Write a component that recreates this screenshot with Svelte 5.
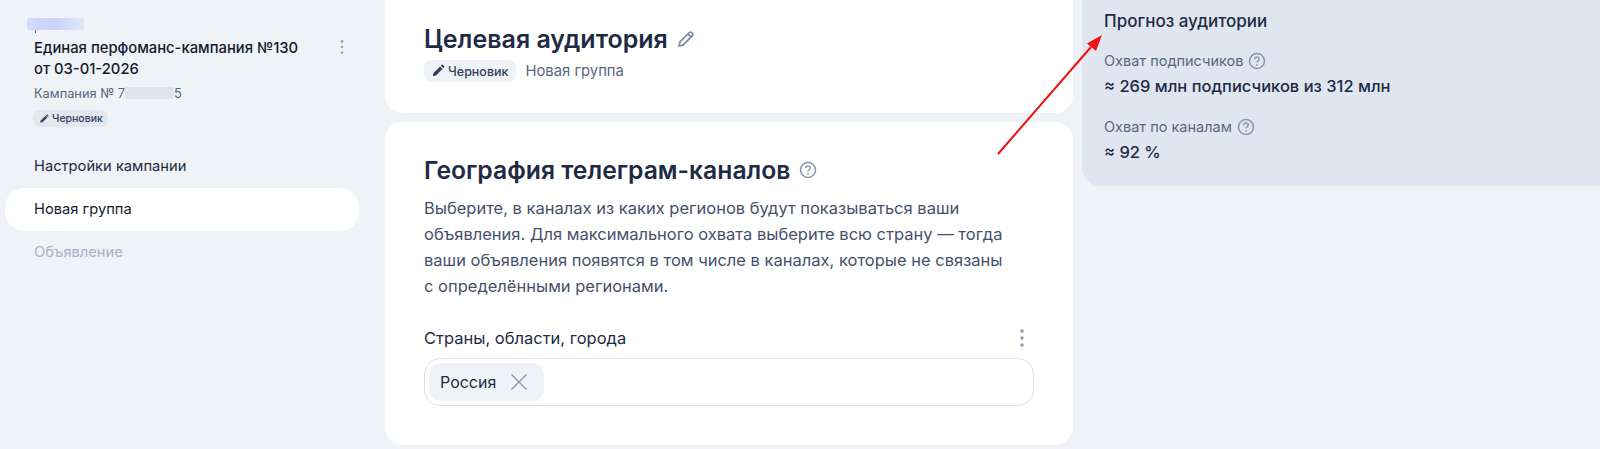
<script lang="ts">
  const navItems = [
    { label: "Настройки кампании", state: "" },
    { label: "Новая группа", state: "active" },
    { label: "Объявление", state: "disabled" },
  ];
</script>

{#snippet dots(cls)}
  <svg class={cls} viewBox="0 0 4 20" width="4" height="20" fill="currentColor">
    <circle cx="2" cy="3" r="1.7" />
    <circle cx="2" cy="10" r="1.7" />
    <circle cx="2" cy="17" r="1.7" />
  </svg>
{/snippet}

{#snippet pencil(size)}
  <svg viewBox="0 0 16 16" width={size} height={size} fill="currentColor">
    <path d="M2 14l.8-3.600 7.600-7.600 2.800 2.800-7.600 7.600L2 14z" />
    <path d="M11.200 2l1-1c.4-.4 1-.4 1.400 0l1.400 1.400c.4.4.4 1 0 1.400l-1 1L11.200 2z" />
  </svg>
{/snippet}

{#snippet help()}
  <svg class="help" viewBox="0 0 18 18" width="18" height="18" fill="none" stroke="currentColor">
    <circle cx="9" cy="9" r="7.500" stroke-width="1.600" />
    <path d="M6.800 7.200c0-1.300 1-2.100 2.200-2.100s2.200.8 2.200 2c0 1.700-2.200 1.700-2.200 3.400" stroke-width="1.500" />
    <circle cx="9" cy="12.800" r=".9" fill="currentColor" stroke="none" />
  </svg>
{/snippet}

<div class="page">
  <aside class="sidebar">
    <div class="head">
      <div class="blur-top"></div>
      <div class="blur-tick"></div>
      <div class="title-row">
        <div class="title">Единая перфоманс-кампания №130<br />от 03-01-2026</div>
        <span class="title-dots">{@render dots("dots-sm")}</span>
      </div>
      <div class="camp-id">Кампания № 7<span class="mask"></span>5</div>
      <span class="badge small">{@render pencil(10)}Черновик</span>
    </div>
    <nav>
      {#each navItems as item}
        <div class="nav-item {item.state}">{item.label}</div>
      {/each}
    </nav>
  </aside>

  <main>
    <section class="card first">
      <h2>Целевая аудитория <span class="edit"><svg viewBox="0 0 18 18" width="18" height="18" fill="none" stroke="currentColor" stroke-width="1.700"><path d="M2 16l.9-4L12.400 2.500a1.600 1.600 0 0 1 2.300 0l.8.8a1.600 1.600 0 0 1 0 2.300L6 15.100 2 16z" /><path d="M10.800 4l3.200 3.200" /></svg></span></h2>
      <div class="status">
        <span class="badge">{@render pencil(14)}Черновик</span>
        <span class="group-name">Новая группа</span>
      </div>
    </section>

    <section class="card second">
      <h2>География телеграм-каналов {@render help()}</h2>
      <p>
        Выберите, в каналах из каких регионов будут показываться ваши объявления. Для максимального охвата выберите всю страну — тогда ваши объявления появятся в том числе в каналах, которые не связаны с определёнными регионами.
      </p>
      <div class="field-label">
        <span>Страны, области, города</span>
        {@render dots("dots-lg")}
      </div>
      <div class="input">
        <span class="chip">
          Россия
          <svg viewBox="0 0 18 18" width="18" height="18" fill="none" stroke="currentColor" stroke-width="1.400"><path d="M1.500 1.500l15 15M16.500 1.500l-15 15" /></svg>
        </span>
      </div>
    </section>
  </main>

  <aside class="forecast">
    <h3>Прогноз аудитории</h3>
    <div class="metric">
      <div class="metric-label">Охват подписчиков {@render help()}</div>
      <div class="metric-value">≈ 269 млн подписчиков из 312 млн</div>
    </div>
    <div class="metric">
      <div class="metric-label">Охват по каналам {@render help()}</div>
      <div class="metric-value">≈ 92 %</div>
    </div>
  </aside>

  <!-- annotation arrow drawn over the screenshot -->
  <svg class="arrow" width="1600" height="449" viewBox="0 0 1600 449">
    <line x1="998" y1="154" x2="1091" y2="47" stroke="#f01010" stroke-width="2" />
    <path d="M1102 35l-6 16-9-7.500z" fill="#f01010" />
  </svg>
</div>

<style>
  :global(body) {
    margin: 0;
    background: #eff2f7;
  }

  .page {
    position: relative;
    display: grid;
    grid-template-columns: 385px 688px 1fr;
    height: 449px;
    overflow: hidden;
    font-family: Inter, "Noto Sans", sans-serif;
    color: #1f2a44;
  }

  .sidebar {
    padding-top: 18px;
  }

  .head {
    padding: 0 0 0 34px;
  }

  .blur-top {
    width: 57px;
    height: 12px;
    margin-left: -7px;
    background: linear-gradient(90deg, #d3dcf8, #c6d3fb 50%, #e3e8f7);
  }

  .blur-tick {
    width: 1px;
    height: 3px;
    margin-left: 1px;
    background: #3f6bf0;
  }

  .title-row {
    display: flex;
    justify-content: space-between;
    margin-top: 5px;
    width: 310px;
  }

  .title {
    font-size: 14.800px;
    font-weight: 500;
    line-height: 21px;
    color: #141b2e;
  }

  .title-dots {
    color: #9aa3b8;
    margin-top: 1px;
  }

  .dots-sm {
    display: block;
    width: 4px;
    height: 16px;
  }

  .camp-id {
    margin-top: 5px;
    font-size: 12.800px;
    line-height: 18px;
    color: #5b6680;
  }

  .mask {
    display: inline-block;
    width: 49px;
    height: 12px;
    background: #dfe4ec;
    vertical-align: -1px;
  }

  .badge {
    display: inline-flex;
    align-items: center;
    gap: 3px;
    border-radius: 7px;
    background: #eff2f7;
    color: #343f5c;
    font-size: 12.500px;
    font-weight: 500;
    padding: 0 7px;
    height: 22px;
  }

  .badge.small {
    margin-top: 7px;
    margin-left: -1px;
    height: 17px;
    font-size: 10.500px;
    background: #e2e7f0;
    padding: 0 5px 0 6px;
  }

  nav {
    margin-top: 17px;
    width: 354px;
    margin-left: 5px;
    display: flex;
    flex-direction: column;
  }

  .nav-item {
    height: 43px;
    line-height: 43px;
    padding-left: 29px;
    font-size: 14.700px;
    border-radius: 20px;
    color: #1f2a44;
  }

  .nav-item.active {
    background: #fff;
    color: #141b2e;
  }

  .nav-item.disabled {
    color: #a9b2c6;
  }

  main {
    display: flex;
    flex-direction: column;
    gap: 9px;
    height: 445px;
  }

  .card {
    background: #fff;
    border-radius: 18px;
    padding: 0 39px;
  }

  .card.first {
    height: 113px;
    border-radius: 0 0 18px 18px;
    padding-top: 22px;
    box-sizing: border-box;
  }

  .card.second {
    flex: 1;
    padding-top: 31px;
  }

  h2 {
    margin: 0;
    font-size: 24.700px;
    line-height: 34px;
    font-weight: 600;
    color: #1f2a44;
    display: flex;
    align-items: center;
    gap: 9px;
  }

  .card.first h2 {
    font-size: 25px;
  }

  .edit {
    display: flex;
    color: #7c87a0;
  }

  .help {
    color: #8c96ad;
  }

  .status {
    display: flex;
    align-items: center;
    gap: 10px;
    margin-top: 4px;
  }

  .group-name {
    font-size: 14.800px;
    color: #5b6680;
  }

  p {
    margin: 8px 0 0;
    width: 585px;
    font-size: 16.500px;
    line-height: 26px;
    color: #46506a;
  }

  .field-label {
    display: flex;
    justify-content: space-between;
    align-items: center;
    margin-top: 27px;
    font-size: 16.500px;
    line-height: 24px;
    color: #1f2a44;
    width: 600px;
  }

  .dots-lg {
    color: #8f99ae;
  }

  .input {
    margin-top: 8px;
    width: 610px;
    height: 48px;
    box-sizing: border-box;
    border: 1px solid #dcdfea;
    border-radius: 16px;
    padding: 4px;
  }

  .chip {
    display: inline-flex;
    align-items: center;
    gap: 14px;
    height: 38px;
    padding: 0 16px 0 11px;
    border-radius: 12px;
    background: #eff2f7;
    font-size: 16px;
    color: #1f2a44;
  }

  .chip svg {
    color: #8c96ad;
  }

  .forecast {
    margin: 0 0 0 9px;
    height: 186px;
    box-sizing: border-box;
    background: #e0e6f0;
    border-radius: 0 0 0 18px;
    padding: 9px 22px;
  }

  h3 {
    margin: 0;
    font-size: 17px;
    font-weight: 500;
    line-height: 24px;
    color: #1f2a44;
  }

  .metric {
    margin-top: 15px;
  }

  .metric + .metric {
    margin-top: 15px;
  }

  .metric-label {
    display: flex;
    align-items: center;
    gap: 5px;
    font-size: 14.500px;
    line-height: 25px;
    color: #5b6680;
  }

  .metric-value {
    font-size: 16.500px;
    font-weight: 500;
    line-height: 26px;
    color: #1f2a44;
  }

  .arrow {
    position: absolute;
    inset: 0;
    pointer-events: none;
  }
</style>
